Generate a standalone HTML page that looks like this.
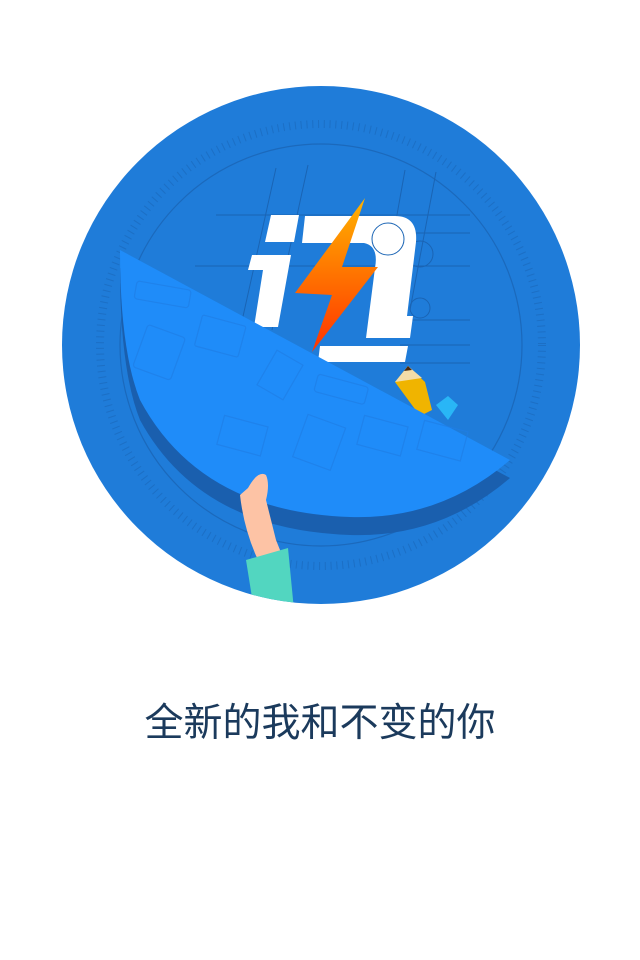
<!DOCTYPE html>
<html><head><meta charset="utf-8"><style>
html,body{margin:0;padding:0;background:#fff;width:640px;height:960px;overflow:hidden}
svg{position:absolute;left:0;top:0}
.t{position:absolute;left:0;width:640px;top:692px;text-align:center;font-family:"Liberation Sans","Noto Sans CJK SC",sans-serif;font-size:39px;color:#1b3a5c;letter-spacing:0px}
</style></head><body>
<svg width="640" height="960" viewBox="0 0 640 960">
<defs>
<linearGradient id="g" x1="0" y1="0" x2="0" y2="1"><stop offset="0" stop-color="#ffb300"/><stop offset="1" stop-color="#ff3300"/></linearGradient>
<clipPath id="c"><circle cx="321" cy="345" r="259"/></clipPath>
</defs>
<circle cx="321" cy="345" r="259" fill="#1f7cd9"/>
<g fill="none" stroke="#1a64b4">
<circle cx="321" cy="345" r="221" stroke-width="8" stroke-dasharray="1 4.8" opacity=".55"/>
<circle cx="321" cy="345" r="201" stroke-width="1.2" opacity=".8"/>
<line x1="276" y1="168" x2="240" y2="330" stroke-width="1"/>
<line x1="308" y1="165" x2="272" y2="330"/>
<line x1="405" y1="170" x2="380" y2="310"/>
<line x1="436" y1="172" x2="410" y2="310"/>
<line x1="216" y1="215" x2="470" y2="215"/>
<line x1="195" y1="266" x2="470" y2="266"/>
<line x1="380" y1="233" x2="470" y2="233"/>
<line x1="400" y1="320" x2="470" y2="320"/>
<line x1="400" y1="345" x2="470" y2="345"/>
<line x1="400" y1="363" x2="470" y2="363"/>
<circle cx="420" cy="254" r="13"/>
<circle cx="420" cy="308" r="10"/>
</g>
<g fill="#fff">
<polygon points="271,215 299,215 294,242 265,242"/>
<polygon points="252,255 291,255 278,327 254,327 263,270 248,270"/>
<path d="M305,216 L395,216 Q418,216 416,242 L407,316 L413,316 L410,338 L366,338 L375,268 Q379,246 364,243 L302,243 Z"/>
<polygon points="320,346 408,346 405,362 318,362"/>
</g>
<circle cx="388" cy="239" r="16" fill="none" stroke="#1a64b4" stroke-width="1"/>
<polygon points="365,198 295,293 332,295 312,352 378,267 342,267" fill="url(#g)"/>
<polygon points="395,382 408,366 425,382 432,410 420,416" fill="#f0b400"/>
<polygon points="395,382 408,366 422,378" fill="#f4dca8"/>
<polygon points="404,371 408,366 412,370" fill="#4a2a10"/>
<polygon points="436,405 448,396 458,405 448,420" fill="#29b6f6"/>
<g clip-path="url(#c)">
<path d="M120,268 L510,478 Q440,538 350,535 Q200,530 140,420 Q120,370 120,268 Z" fill="#1a5fae"/>
<path d="M120,250 L510,460 Q440,520 350,517 Q200,512 140,400 Q120,350 120,250 Z" fill="#1f8cf9"/>
<path d="M248,488 Q258,470 266,475 Q270,484 266,500 L276,540 L282,555 L258,560 Q244,530 240,495 Z" fill="#fdc3a5"/>
<polygon points="246,560 288,548 294,610 254,610" fill="#52d6c0"/>
</g>
<g fill="none" stroke="#1f7ee6" stroke-width="1.2" opacity=".7">
<rect x="135" y="285" width="55" height="18" rx="3" transform="rotate(10 160 295)"/>
<rect x="198" y="320" width="45" height="32" rx="2" transform="rotate(15 220 335)"/>
<rect x="140" y="330" width="40" height="45" rx="3" transform="rotate(20 160 350)"/>
<rect x="265" y="355" width="30" height="40" transform="rotate(30 280 375)"/>
<rect x="315" y="380" width="52" height="18" rx="3" transform="rotate(15 340 390)"/>
<rect x="220" y="420" width="45" height="30" transform="rotate(15 240 435)"/>
<rect x="300" y="420" width="40" height="45" transform="rotate(20 320 440)"/>
<rect x="360" y="420" width="45" height="30" transform="rotate(15 380 435)"/>
<rect x="420" y="425" width="45" height="30" transform="rotate(15 440 440)"/>
</g>
</svg>
<div class="t">全新的我和不变的你</div>
</body></html>
